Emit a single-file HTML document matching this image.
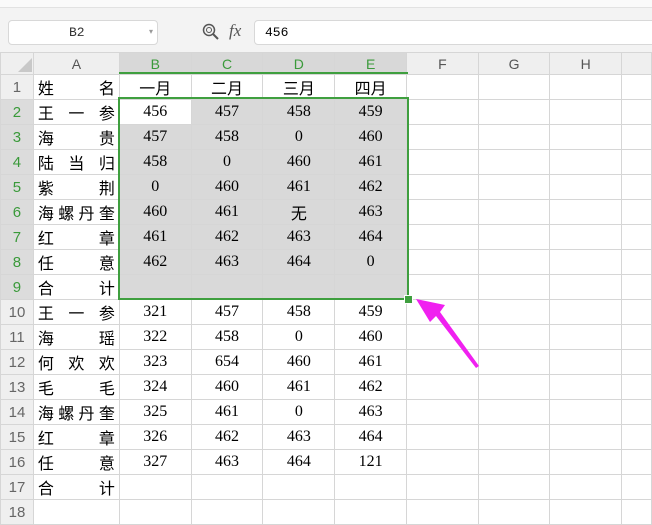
<!DOCTYPE html><html><head><meta charset="utf-8"><style>
body{margin:0;width:652px;height:520px;overflow:hidden;background:#fff;font-family:"Liberation Serif","Noto Sans CJK SC",serif;position:relative}
.top{position:absolute;left:0;top:0;width:652px;height:52px;background:#f3f3f3}
.strip{position:absolute;left:0;top:0;width:652px;height:7px;background:#fafafa;border-bottom:1px solid #e2e2e2}
.nb{position:absolute;left:8px;top:20px;width:148px;height:23px;background:#fff;border:1px solid #d8d8d8;border-radius:4px;font:13px "Liberation Mono",monospace;color:#333;line-height:23px;text-indent:60px}
.fb{position:absolute;left:254px;top:20px;width:400px;height:23px;background:#fff;border:1px solid #d8d8d8;border-radius:4px;font:13px "Liberation Mono",monospace;line-height:23px;text-indent:10px}
table{position:absolute;left:0;top:52px;border-collapse:collapse;table-layout:fixed}
td{border:1px solid #d6d6d6;height:24px;padding:0;text-align:center;font-size:16px;color:#000;white-space:nowrap;overflow:hidden}
tr.h td{height:21px;background:#efefef;color:#555;font:14px "Liberation Sans",sans-serif}
td.r{background:#efefef;color:#666;font:15px "Liberation Sans",sans-serif}
td.rs{background:#dcdcdc;color:#3a9a3a}
tr.h td.cs{background:#d8d8d8;color:#3a9a3a}
td.a{text-align:justify;text-align-last:justify;padding:0 4px;font-family:"Noto Sans CJK SC",sans-serif}
td.s{background:#d9d9d9}
.sel{position:absolute;left:118px;top:97px;width:287px;height:199px;border:2px solid #3f9f3f}
.hl{position:absolute;left:119px;top:72px;width:289px;height:2px;background:#3f9f3f}
.fh{position:absolute;left:404px;top:295px;width:7px;height:7px;background:#3f9f3f;border:1px solid #fff}
</style></head><body>
<div class="top"><div class="strip"></div>
<div class="nb">B2<span style="position:absolute;left:140px;top:0;font-size:8px;color:#999;text-indent:0">▾</span></div>
<svg style="position:absolute;left:201px;top:23px" width="20" height="18"><circle cx="8" cy="7" r="5.5" fill="none" stroke="#555" stroke-width="1.5"/><circle cx="8" cy="7" r="2.5" fill="none" stroke="#555"/><path d="M12 11l5 5" stroke="#555" stroke-width="2"/></svg>
<div style="position:absolute;left:229px;top:21px;font:italic 17px 'Liberation Serif',serif;color:#555">fx</div>
<div class="fb">456</div></div>
<table>
<colgroup><col style="width:33px"><col style="width:86px"><col style="width:72px"><col style="width:72px"><col style="width:72px"><col style="width:72px"><col style="width:72px"><col style="width:72px"><col style="width:72px"><col style="width:30px"></colgroup>
<tr class="h"><td><svg width="14" height="14" style="position:relative;top:3px;left:8px"><path d="M14 0V14H0Z" fill="#c8c8c8"/></svg></td><td>A</td><td class="cs">B</td><td class="cs">C</td><td class="cs">D</td><td class="cs">E</td><td>F</td><td>G</td><td>H</td><td></td></tr>
<tr><td class="r">1</td><td class="a">姓 名</td><td>一月</td><td>二月</td><td>三月</td><td>四月</td><td></td><td></td><td></td><td></td></tr>
<tr><td class="r rs">2</td><td class="a">王 一 参</td><td>456</td><td class="s">457</td><td class="s">458</td><td class="s">459</td><td></td><td></td><td></td><td></td></tr>
<tr><td class="r rs">3</td><td class="a">海 贵</td><td class="s">457</td><td class="s">458</td><td class="s">0</td><td class="s">460</td><td></td><td></td><td></td><td></td></tr>
<tr><td class="r rs">4</td><td class="a">陆 当 归</td><td class="s">458</td><td class="s">0</td><td class="s">460</td><td class="s">461</td><td></td><td></td><td></td><td></td></tr>
<tr><td class="r rs">5</td><td class="a">紫 荆</td><td class="s">0</td><td class="s">460</td><td class="s">461</td><td class="s">462</td><td></td><td></td><td></td><td></td></tr>
<tr><td class="r rs">6</td><td class="a">海螺丹奎</td><td class="s">460</td><td class="s">461</td><td class="s" style="font-family:'Noto Sans CJK SC',sans-serif">无</td><td class="s">463</td><td></td><td></td><td></td><td></td></tr>
<tr><td class="r rs">7</td><td class="a">红 章</td><td class="s">461</td><td class="s">462</td><td class="s">463</td><td class="s">464</td><td></td><td></td><td></td><td></td></tr>
<tr><td class="r rs">8</td><td class="a">任 意</td><td class="s">462</td><td class="s">463</td><td class="s">464</td><td class="s">0</td><td></td><td></td><td></td><td></td></tr>
<tr><td class="r rs">9</td><td class="a">合 计</td><td class="s"></td><td class="s"></td><td class="s"></td><td class="s"></td><td></td><td></td><td></td><td></td></tr>
<tr><td class="r">10</td><td class="a">王 一 参</td><td>321</td><td>457</td><td>458</td><td>459</td><td></td><td></td><td></td><td></td></tr>
<tr><td class="r">11</td><td class="a">海 瑶</td><td>322</td><td>458</td><td>0</td><td>460</td><td></td><td></td><td></td><td></td></tr>
<tr><td class="r">12</td><td class="a">何 欢 欢</td><td>323</td><td>654</td><td>460</td><td>461</td><td></td><td></td><td></td><td></td></tr>
<tr><td class="r">13</td><td class="a">毛 毛</td><td>324</td><td>460</td><td>461</td><td>462</td><td></td><td></td><td></td><td></td></tr>
<tr><td class="r">14</td><td class="a">海螺丹奎</td><td>325</td><td>461</td><td>0</td><td>463</td><td></td><td></td><td></td><td></td></tr>
<tr><td class="r">15</td><td class="a">红 章</td><td>326</td><td>462</td><td>463</td><td>464</td><td></td><td></td><td></td><td></td></tr>
<tr><td class="r">16</td><td class="a">任 意</td><td>327</td><td>463</td><td>464</td><td>121</td><td></td><td></td><td></td><td></td></tr>
<tr><td class="r">17</td><td class="a">合 计</td><td></td><td></td><td></td><td></td><td></td><td></td><td></td><td></td></tr>
<tr><td class="r">18</td><td></td><td></td><td></td><td></td><td></td><td></td><td></td><td></td><td></td></tr>
</table>
<div class="hl"></div><div class="sel"></div><div class="fh"></div>
<svg style="position:absolute;left:0;top:0" width="652" height="520"><path d="M416 299L445 305L440 312L479 366L476 368L436 316L430 322Z" fill="#f020f0"/></svg>
</body></html>
